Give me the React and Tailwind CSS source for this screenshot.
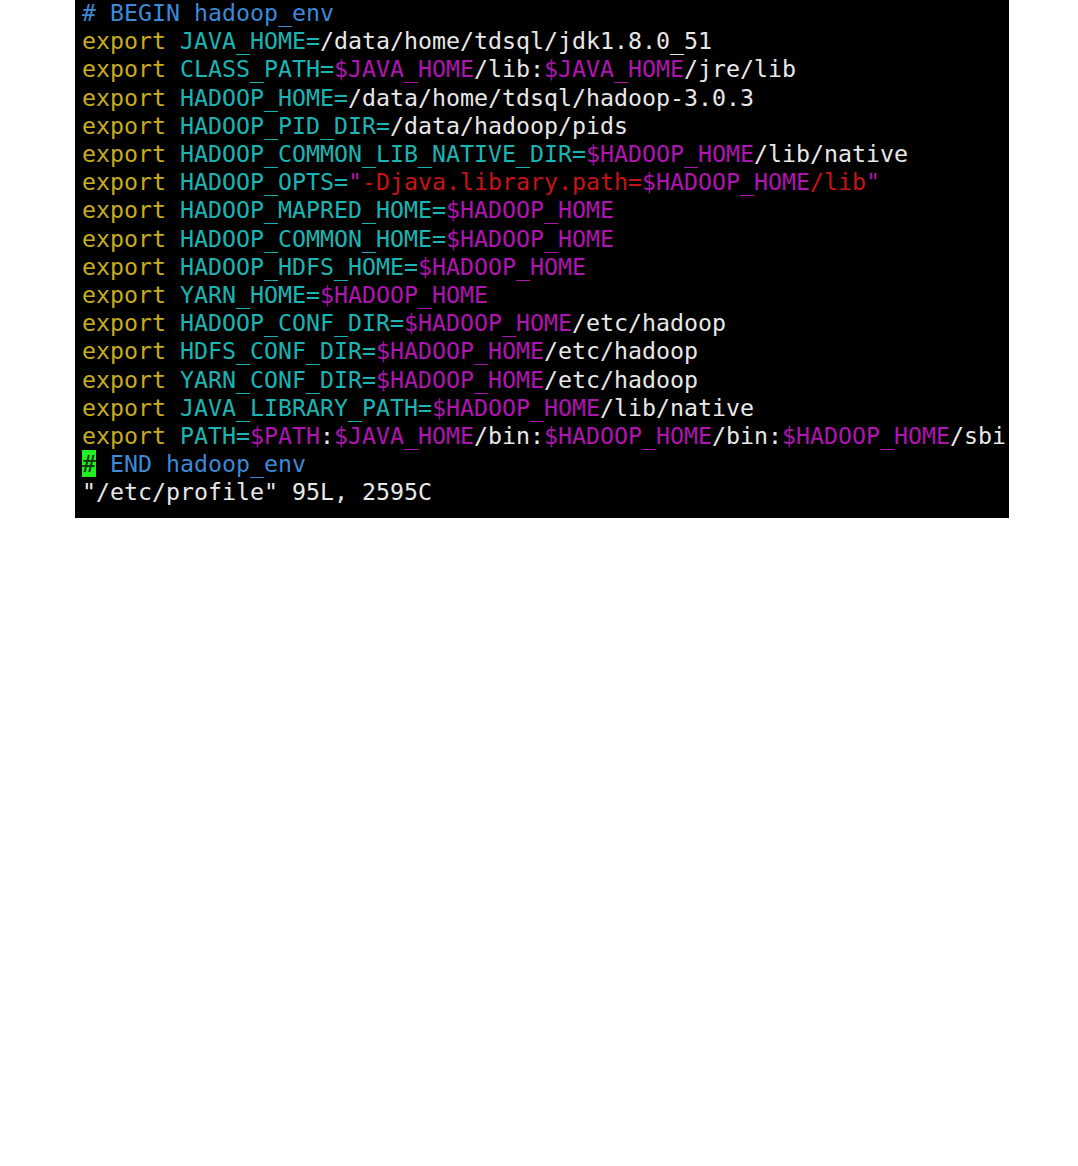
const Y = ({ children }) => <span className="text-[#c8ad1c]">{children}</span>;
const C = ({ children }) => <span className="text-[#1ab4b4]">{children}</span>;
const M = ({ children }) => <span className="text-[#b014b0]">{children}</span>;
const W = ({ children }) => <span className="text-[#e8e8e8]">{children}</span>;
const R = ({ children }) => <span className="text-[#c81414]">{children}</span>;
const B = ({ children }) => <span className="text-[#3a8ad8]">{children}</span>;

const Ex = () => <Y>export </Y>;

const App = () => {
  return (
    <div className="min-h-[1166px] bg-white pl-[75px] pr-[69px]">
      <div
        className="bg-black pl-[7px] pt-0 pb-[10px] h-[518px] overflow-hidden whitespace-pre text-[23.25px] leading-[28.2px]"
        style={{ fontFamily: '"DejaVu Sans Mono", monospace' }}
      >
        <div className="-mt-[1px]"><B># BEGIN hadoop_env</B></div>
        <div><Ex /><C>JAVA_HOME=</C><W>/data/home/tdsql/jdk1.8.0_51</W></div>
        <div><Ex /><C>CLASS_PATH=</C><M>$JAVA_HOME</M><W>/lib:</W><M>$JAVA_HOME</M><W>/jre/lib</W></div>
        <div><Ex /><C>HADOOP_HOME=</C><W>/data/home/tdsql/hadoop-3.0.3</W></div>
        <div><Ex /><C>HADOOP_PID_DIR=</C><W>/data/hadoop/pids</W></div>
        <div><Ex /><C>HADOOP_COMMON_LIB_NATIVE_DIR=</C><M>$HADOOP_HOME</M><W>/lib/native</W></div>
        <div><Ex /><C>HADOOP_OPTS=</C><M>"</M><R>-Djava.library.path=</R><M>$HADOOP_HOME</M><R>/lib</R><M>"</M></div>
        <div><Ex /><C>HADOOP_MAPRED_HOME=</C><M>$HADOOP_HOME</M></div>
        <div><Ex /><C>HADOOP_COMMON_HOME=</C><M>$HADOOP_HOME</M></div>
        <div><Ex /><C>HADOOP_HDFS_HOME=</C><M>$HADOOP_HOME</M></div>
        <div><Ex /><C>YARN_HOME=</C><M>$HADOOP_HOME</M></div>
        <div><Ex /><C>HADOOP_CONF_DIR=</C><M>$HADOOP_HOME</M><W>/etc/hadoop</W></div>
        <div><Ex /><C>HDFS_CONF_DIR=</C><M>$HADOOP_HOME</M><W>/etc/hadoop</W></div>
        <div><Ex /><C>YARN_CONF_DIR=</C><M>$HADOOP_HOME</M><W>/etc/hadoop</W></div>
        <div><Ex /><C>JAVA_LIBRARY_PATH=</C><M>$HADOOP_HOME</M><W>/lib/native</W></div>
        <div><Ex /><C>PATH=</C><M>$PATH</M><W>:</W><M>$JAVA_HOME</M><W>/bin:</W><M>$HADOOP_HOME</M><W>/bin:</W><M>$HADOOP_HOME</M><W>/sbi</W></div>
        <div><span className="bg-[#22ee22] text-[#103010]">#</span><B> END hadoop_env</B></div>
        <div><W>"/etc/profile" 95L, 2595C</W></div>
      </div>
    </div>
  );
};

export default App;
